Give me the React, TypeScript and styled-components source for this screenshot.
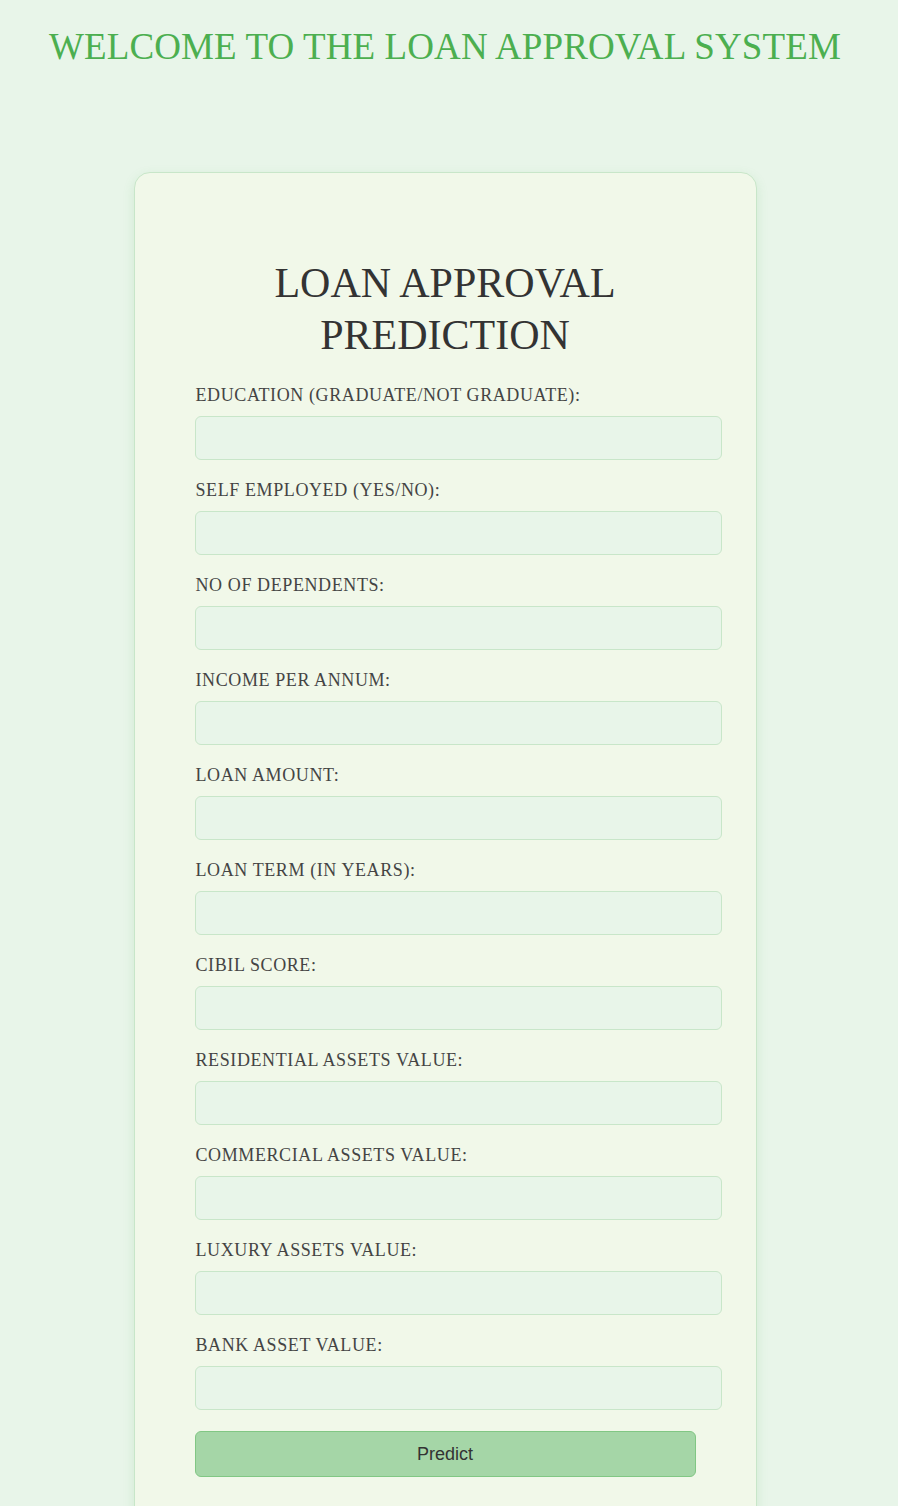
import React from "react";
import styled, { createGlobalStyle } from "styled-components";

const GlobalStyle = createGlobalStyle`
  html, body {
    margin: 0;
    padding: 0;
    background: #e8f5e9;
  }
  body {
    font-family: "Liberation Serif", "DejaVu Serif", serif;
  }
`;

const Page = styled.div`
  box-sizing: border-box;
  width: 898px;
  min-height: 1506px;
  padding: 0 8px 0 0;
  display: flex;
  flex-direction: column;
  align-items: center;
  overflow: hidden;
`;

const SiteTitle = styled.h1`
  margin: 24px 0 0;
  font-family: "Liberation Serif", "DejaVu Serif", serif;
  font-weight: 400;
  font-size: 37px;
  line-height: 46px;
  letter-spacing: 0.1px;
  color: #4caf50;
  text-transform: uppercase;
  text-align: center;
  white-space: nowrap;
`;

const Card = styled.div`
  margin-top: 102px;
  width: 501px;
  padding: 60px 60px 60px;
  background: #f1f8e9;
  border: 1px solid #c8e6c9;
  border-radius: 16px;
  box-shadow: 0 4px 12px rgba(76, 175, 80, 0.15);
`;

const CardTitle = styled.h2`
  margin: 24px 0 23px;
  font-family: "Liberation Serif", "DejaVu Serif", serif;
  font-weight: 400;
  font-size: 42px;
  line-height: 52px;
  letter-spacing: 0;
  color: #333333;
  text-transform: uppercase;
  text-align: center;
`;

const Form = styled.form`
  display: flex;
  flex-direction: column;
`;

const Field = styled.div`
  display: flex;
  flex-direction: column;
  margin-bottom: 19px;
`;

const Label = styled.label`
  font-family: "Liberation Serif", "DejaVu Serif", serif;
  font-size: 18px;
  line-height: 22px;
  letter-spacing: 0.6px;
  color: #444444;
  text-transform: uppercase;
  margin: 0 0 10px 1px;
`;

const Input = styled.input`
  box-sizing: content-box;
  width: 100%;
  height: 18px;
  padding: 12px;
  font-size: 16px;
  border: 1px solid #c8e6c9;
  border-radius: 6px;
  background: #e8f5e9;
  outline: none;
  margin: 0;
`;

const Button = styled.button`
  width: 100%;
  height: 46px;
  margin-top: 2px;
  background: #a5d6a7;
  border: 1px solid #81c784;
  border-radius: 6px;
  font-family: "Liberation Sans", Arial, sans-serif;
  font-size: 18px;
  color: #333333;
  cursor: pointer;
`;

const fields = [
  "Education (Graduate/Not Graduate):",
  "Self Employed (Yes/No):",
  "No of Dependents:",
  "Income per Annum:",
  "Loan Amount:",
  "Loan Term (in years):",
  "CIBIL Score:",
  "Residential Assets Value:",
  "Commercial Assets Value:",
  "Luxury Assets Value:",
  "Bank Asset Value:",
];

export default function App() {
  return (
    <>
      <GlobalStyle />
      <Page>
        <SiteTitle>Welcome to the Loan Approval System</SiteTitle>
        <Card>
          <CardTitle>
            Loan Approval
            <br />
            Prediction
          </CardTitle>
          <Form onSubmit={(e) => e.preventDefault()}>
            {fields.map((f, i) => (
              <Field key={f}>
                <Label htmlFor={`f${i}`}>{f}</Label>
                <Input id={`f${i}`} type="text" />
              </Field>
            ))}
            <Button type="submit">Predict</Button>
          </Form>
        </Card>
      </Page>
    </>
  );
}
